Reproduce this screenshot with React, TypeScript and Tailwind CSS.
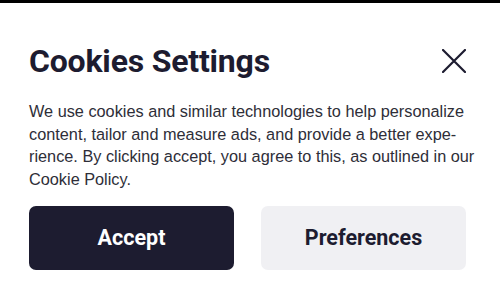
export default function App() {
  return (
    <div className="min-h-[300px] w-[500px] overflow-hidden bg-white font-['Roboto',sans-serif]">
      <div className="h-[3px] bg-black" />
      <div className="pl-[29px] pr-[34px]">
        <div className="flex items-center justify-between pt-[36px]">
          <h1 className="text-[32px] font-bold leading-[44px] tracking-[-0.2px] text-[#1d1c30]">
            Cookies Settings
          </h1>
          <button aria-label="Close" className="flex h-[24px] w-[24px] items-center justify-center text-[#1d1c30]">
            <svg width="24" height="24" viewBox="0 0 24 24" fill="none" stroke="currentColor" strokeWidth="2.2" strokeLinecap="round">
              <path d="M1 1 L23 23 M23 1 L1 23" />
            </svg>
          </button>
        </div>
        <p className="mt-[17px] whitespace-nowrap font-['Liberation_Sans',Arial,sans-serif] text-[16.3px] leading-[22.7px] text-[#2e2e38]">
          We use cookies and similar technologies to help personalize
          <br />
          content, tailor and measure ads, and provide a better expe-
          <br />
          rience. By clicking accept, you agree to this, as outlined in our
          <br />
          Cookie Policy.
        </p>
        <div className="mt-[15px] grid grid-cols-2 gap-[27px]">
          <button className="h-[64px] rounded-[7px] bg-[#1d1c30] text-[21.5px] font-bold text-white">
            Accept
          </button>
          <button className="h-[64px] rounded-[7px] bg-[#f0f0f3] text-[21.5px] font-bold text-[#1d1c30]">
            Preferences
          </button>
        </div>
      </div>
    </div>
  );
}
